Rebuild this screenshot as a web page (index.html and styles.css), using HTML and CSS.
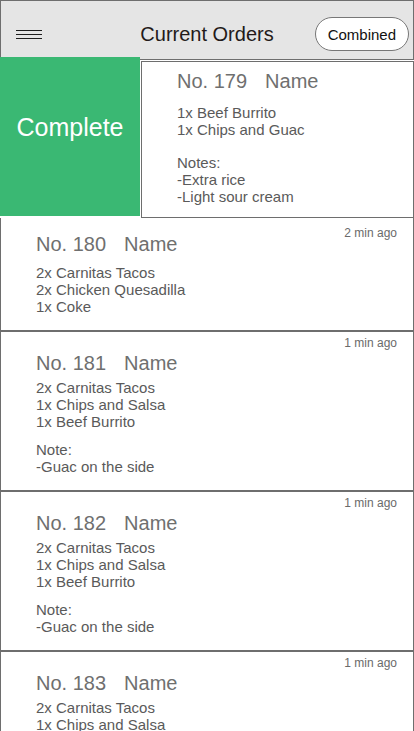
FILE: index.html
```html
<!DOCTYPE html>
<html lang="en">
<head>
<meta charset="utf-8">
<title>Current Orders</title>
<link rel="stylesheet" href="styles.css">
</head>
<body>
<header class="topbar">
  <button class="menu" aria-label="Menu">
    <svg width="26" height="9" viewBox="0 0 26 9" aria-hidden="true">
      <path d="M0 0.5H26M0 4.5H26M0 8.5H26" stroke="#1e1e1e" stroke-width="1" fill="none"/>
    </svg>
  </button>
  <h1 class="title">Current Orders</h1>
  <button class="combined">Combined</button>
</header>

<section class="swipe-row">
  <div class="action-complete">Complete</div>
  <div class="swipe-card-wrap">
    <article class="order order--swiped">
      <h2 class="order-title">No. 179<span class="name">Name</span></h2>
      <ul class="items">
        <li>1x Beef Burrito</li>
        <li>1x Chips and Guac</li>
      </ul>
      <ul class="notes notes--wide">
        <li>Notes:</li>
        <li>-Extra rice</li>
        <li>-Light sour cream</li>
      </ul>
    </article>
  </div>
</section>

<article class="order order--first">
  <span class="time time--low">2 min ago</span>
  <h2 class="order-title">No. 180<span class="name">Name</span></h2>
  <ul class="items">
    <li>2x Carnitas Tacos</li>
    <li>2x Chicken Quesadilla</li>
    <li>1x Coke</li>
  </ul>
</article>

<article class="order">
  <span class="time">1 min ago</span>
  <h2 class="order-title">No. 181<span class="name">Name</span></h2>
  <ul class="items">
    <li>2x Carnitas Tacos</li>
    <li>1x Chips and Salsa</li>
    <li>1x Beef Burrito</li>
  </ul>
  <ul class="notes">
    <li>Note:</li>
    <li>-Guac on the side</li>
  </ul>
</article>

<article class="order">
  <span class="time">1 min ago</span>
  <h2 class="order-title">No. 182<span class="name">Name</span></h2>
  <ul class="items">
    <li>2x Carnitas Tacos</li>
    <li>1x Chips and Salsa</li>
    <li>1x Beef Burrito</li>
  </ul>
  <ul class="notes">
    <li>Note:</li>
    <li>-Guac on the side</li>
  </ul>
</article>

<article class="order">
  <span class="time">1 min ago</span>
  <h2 class="order-title">No. 183<span class="name">Name</span></h2>
  <ul class="items">
    <li>2x Carnitas Tacos</li>
    <li>1x Chips and Salsa</li>
    <li>1x Beef Burrito</li>
  </ul>
  <ul class="notes">
    <li>Note:</li>
    <li>-Guac on the side</li>
  </ul>
</article>
</body>
</html>
```

FILE: styles.css
```css
* {
  box-sizing: border-box;
}

html, body {
  margin: 0;
  padding: 0;
  background: #ffffff;
}

body {
  font-family: "Liberation Sans", Arial, Helvetica, sans-serif;
  width: 414px;
  overflow: hidden;
}

.topbar {
  display: grid;
  grid-template-columns: 1fr auto 1fr;
  align-items: center;
  height: 60px;
  padding: 16px 4px 8px 4px;
  background: #e5e5e5;
  border: 1px solid #6e6e6e;
}

.menu {
  justify-self: start;
  margin: 0 0 0 11px;
  padding: 0;
  border: 0;
  background: none;
  display: flex;
  width: 26px;
  height: 9px;
}

.menu svg {
  display: block;
}

.title {
  margin: 0;
  font-size: 20px;
  line-height: 24px;
  font-weight: normal;
  color: #231a19;
  white-space: nowrap;
}

.combined {
  justify-self: end;
  height: 34px;
  padding: 0 12px;
  border: 1px solid #777777;
  border-radius: 17px;
  background: #ffffff;
  font-family: inherit;
  font-size: 15px;
  line-height: 17px;
  color: #111111;
}

.swipe-row {
  display: flex;
  align-items: flex-start;
  margin-top: -3px;
  gap: 1px;
}

.action-complete {
  flex: 0 0 140px;
  height: 159px;
  padding-top: 55px;
  background: #3ab873;
  color: #ffffff;
  font-size: 25px;
  line-height: 30px;
  text-align: center;
}

.swipe-card-wrap {
  flex: 1;
  padding-top: 4px;
}

.order {
  position: relative;
  border: 1px solid #6e6e6e;
  padding: 19px 15px 15px 35px;
  color: #5a5a5a;
}

.order--swiped {
  padding: 7px 15px 12px 35px;
}

.order--first {
  border-top: none;
  padding-top: 14px;
}

.order--swiped .items {
  margin-top: 11px;
}

.order--first .items {
  margin-top: 8px;
}

.time {
  position: absolute;
  top: 4px;
  right: 16px;
  font-size: 12px;
  line-height: 14px;
  color: #6a6a6a;
}

.time--low {
  top: 8px;
}

.order-title {
  margin: 0;
  font-size: 20px;
  line-height: 24px;
  font-weight: normal;
  color: #6f6f6f;
  white-space: nowrap;
}

.name {
  margin-left: 18px;
}

.items,
.notes {
  list-style: none;
  margin: 4px 0 0;
  padding: 0;
  font-size: 15px;
  line-height: 17px;
}

.notes {
  margin-top: 11px;
}

.notes--wide {
  margin-top: 16px;
}
```
